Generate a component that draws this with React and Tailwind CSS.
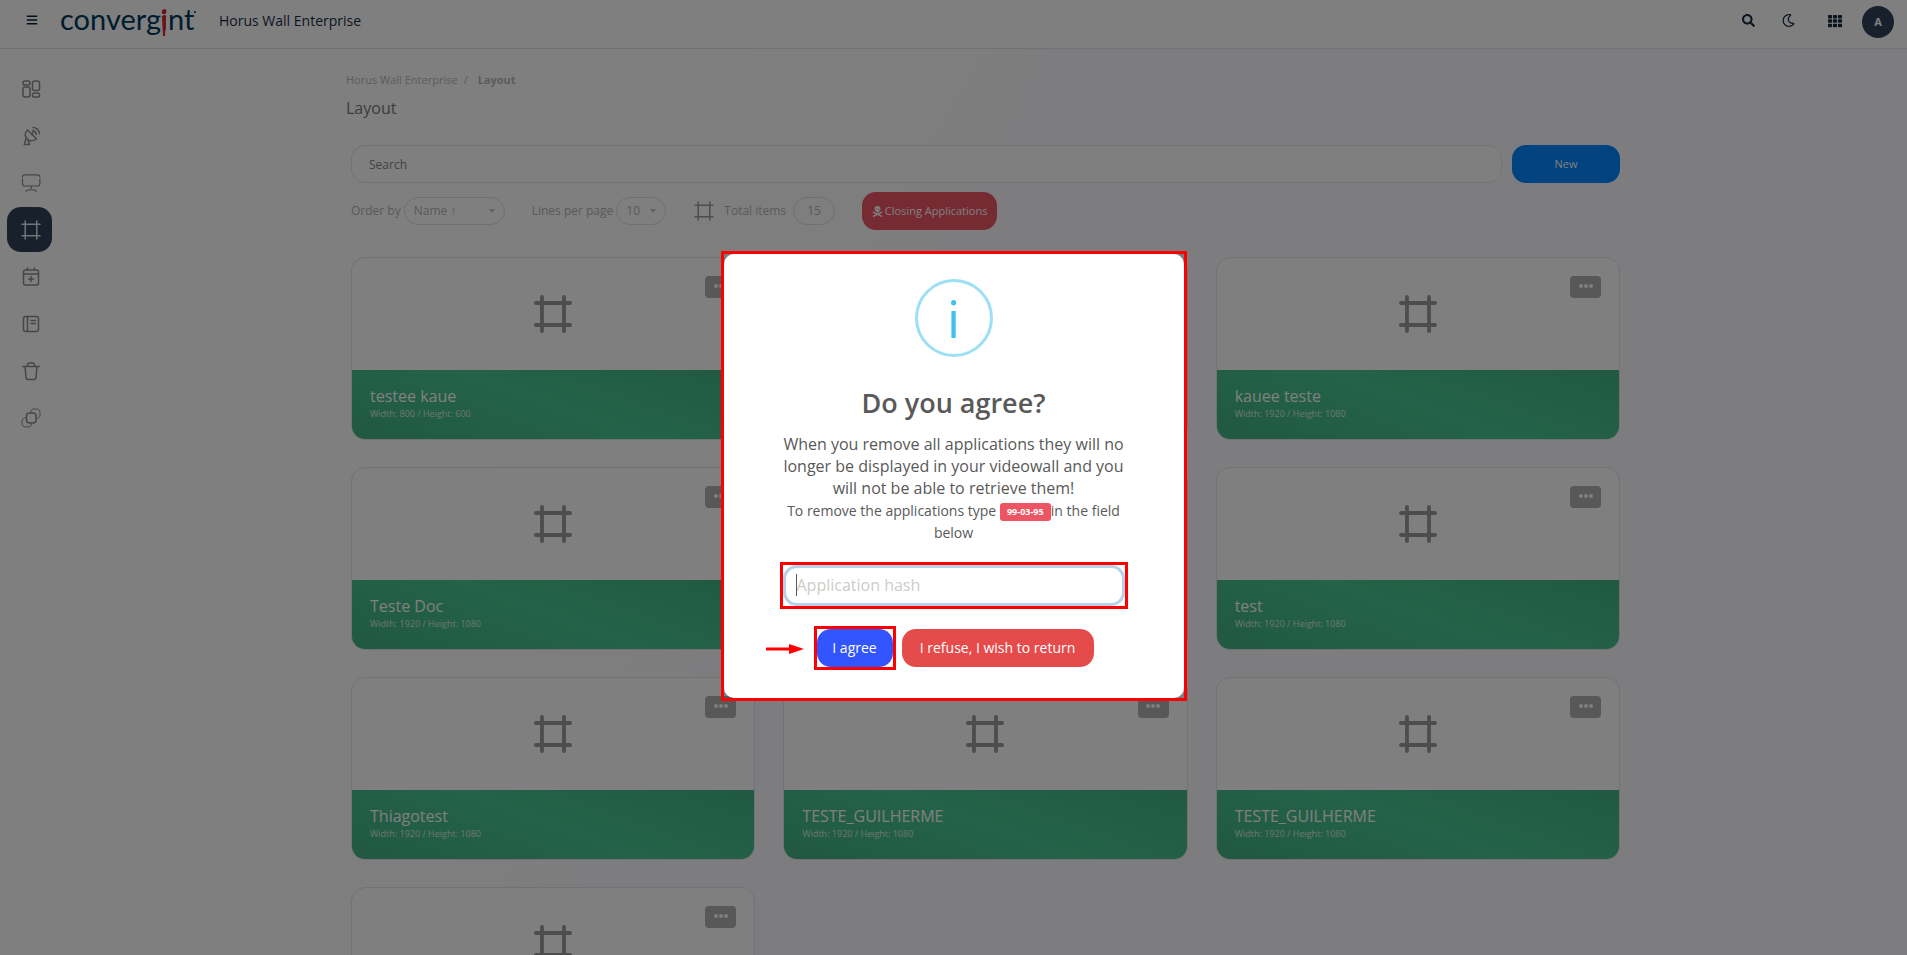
import React from 'react';
import { FaBars, FaSearch, FaRegMoon, FaTh, FaSkullCrossbones } from 'react-icons/fa';

const layouts = [
  { id: 1, name: 'testee kaue', width: 800, height: 600 },
  { id: 2, name: 'teste', width: 1920, height: 1080 },
  { id: 3, name: 'kauee teste', width: 1920, height: 1080 },
  { id: 4, name: 'Teste Doc', width: 1920, height: 1080 },
  { id: 5, name: 'teste', width: 1920, height: 1080 },
  { id: 6, name: 'test', width: 1920, height: 1080 },
  { id: 7, name: 'Thiagotest', width: 1920, height: 1080 },
  { id: 8, name: 'TESTE_GUILHERME', width: 1920, height: 1080 },
  { id: 9, name: 'TESTE_GUILHERME', width: 1920, height: 1080 },
  { id: 10, name: 'teste', width: 1920, height: 1080 },
];

const Icon = ({ className = 'size-5', strokeWidth = 1.5, children }) => (
  <svg
    viewBox="0 0 20 20"
    className={className}
    fill="none"
    stroke="currentColor"
    strokeWidth={strokeWidth}
    strokeLinecap="round"
    strokeLinejoin="round"
    aria-hidden="true"
  >
    {children}
  </svg>
);

const FrameIcon = ({ className, strokeWidth = 2 }) => (
  <Icon className={className} strokeWidth={strokeWidth}>
    <path d="M4.2 1v18M15.8 1v18M1 4.2h18M1 15.8h18" />
  </Icon>
);

const menu = [
  {
    label: 'Dashboard',
    icon: (
      <Icon>
        <rect x="2" y="2" width="7" height="4" rx="1.8" />
        <rect x="2" y="8" width="7" height="10" rx="2" />
        <rect x="11.5" y="2" width="7" height="9.5" rx="2" />
        <rect x="11.5" y="14" width="7" height="4" rx="1.8" />
      </Icon>
    ),
  },
  {
    label: 'Sources',
    icon: (
      <Icon>
        <path d="M6.500 4C3.800 7 3.800 10.500 6.300 13s6.200 2.400 9.200-.2zM5 12.500L3.200 18.500h5.300l-1.500-4M10.500 8.500l1.500-2M11.500 4.500c2.200.3 3.500 1.700 3.800 3.800M12.200 1.500c3.500.4 5.900 2.800 6.300 6.200" />
      </Icon>
    ),
  },
  {
    label: 'Displays',
    icon: (
      <Icon strokeWidth={1.2}>
        <path d="M1.500 3.800c0-1.500.8-2 2.200-2h13c1.400 0 2.200.7 2.200 2.200M18.900 6v4.500c0 1.500-.8 2.500-2.500 2.500H4c-1.700 0-2.500-1-2.500-2.500V5.800M10.200 13v2.500M5 18c2-1.700 8.500-1.700 10.500 0" />
      </Icon>
    ),
  },
  { label: 'Layout', active: true, icon: <FrameIcon className="size-5" strokeWidth={1.5} /> },
  {
    label: 'Schedule',
    icon: (
      <Icon>
        <rect x="2.500" y="3" width="15" height="15" rx="2" />
        <path d="M2.500 7h15M6.500 1v2M13.500 1v2M10 9.500v5M7.500 12h5" />
      </Icon>
    ),
  },
  {
    label: 'Log',
    icon: (
      <Icon>
        <rect x="2.500" y="2.500" width="15" height="15" rx="2" />
        <path d="M6.500 2.500v15M10 6.500h4.500M10 9.500h4.500" />
      </Icon>
    ),
  },
  {
    label: 'Trash',
    icon: (
      <Icon>
        <path d="M1.500 5.500h17M6.500 5.500V4c0-1.300.7-2 2-2h3c1.300 0 2 .7 2 2v1.500M4 5.500l1 11c.1 1.300.8 2 2 2h6c1.200 0 1.900-.7 2-2l1-11" />
      </Icon>
    ),
  },
  {
    label: 'Groups',
    icon: (
      <Icon>
        <rect x="5.500" y="5" width="9.500" height="10" rx="3" />
        <path d="M9.500 4.500c.4-2.300 1.500-3.500 3.500-3.500h2.500c2 0 3.500 1.500 3.500 3.500V7c0 2-1.500 3.500-3.500 3.500" strokeWidth="1" />
        <path d="M5 9.500C2.500 9.800 1 11 1 13v2.500C1 17.500 2.500 19 4.500 19H7c2.300 0 3.500-1.200 3.700-3.500" strokeWidth="1" />
      </Icon>
    ),
  },
];

const Logo = () => (
  <a
    href="#"
    aria-label="convergint"
    className="ml-[22px] flex w-[137px] items-start font-[Lato] text-[29px] leading-[32px] font-normal text-[#003a5d]"
  >
    <span>
      converg
      <span className="relative text-[#d8232a]">
        i
        <svg viewBox="0 0 6 28" className="absolute top-2 left-0 h-7 w-[6px]" aria-hidden="true">
          <circle cx="3" cy="3" r="2.300" fill="currentColor" />
          <path d="M1 7h4l-1 20H2z" fill="currentColor" />
        </svg>
      </span>
      nt
    </span>
    <span className="mt-2 size-[2px] rounded-full bg-[#003a5d]" />
  </a>
);

const Header = () => (
  <header className="flex h-[49px] shrink-0 items-start border-b border-[#e4e4e9] bg-white pr-[13px] pl-[26px] text-[#172c46]">
    <button type="button" aria-label="Toggle menu" className="mt-3.5 text-[#0d2233]">
      <FaBars className="size-3" />
    </button>
    <div className="mt-[3px]">
      <Logo />
    </div>
    <span className="mt-[11px] ml-[22px] text-sm leading-5 font-medium">Horus Wall Enterprise</span>
    <div className="ml-auto flex items-start">
      <button type="button" aria-label="Search" className="mt-3.5">
        <FaSearch className="size-[13px]" />
      </button>
      <button type="button" aria-label="Dark mode" className="mt-3.5 ml-[27px]">
        <FaRegMoon className="size-[13px]" />
      </button>
      <button type="button" aria-label="Applications" className="mt-3.5 ml-[33px]">
        <FaTh className="size-3.5" />
      </button>
      <button
        type="button"
        className="mt-1.5 ml-5 size-8 rounded-full bg-[#304158] text-[11px] font-bold text-white"
      >
        A
      </button>
    </div>
  </header>
);

const Sidebar = () => (
  <nav className="flex w-[65px] shrink-0 flex-col gap-0.5 pt-[17px] pl-[7px]">
    {menu.map((item) => (
      <a
        key={item.label}
        href="#"
        aria-label={item.label}
        className={
          item.active
            ? 'flex size-[45px] items-center justify-center rounded-[14px] bg-[#304158] pl-0.5 text-[#e4e6ea]'
            : 'flex size-[45px] items-center justify-center pl-0.5 text-[#8c8c8c]'
        }
      >
        {item.icon}
      </a>
    ))}
  </nav>
);

const SelectBox = ({ id, label, value, className }) => (
  <div className="flex items-center gap-[3px]">
    <label htmlFor={id}>{label}</label>
    <div className="relative">
      <select
        id={id}
        className={`h-7 appearance-none rounded-[14px] border border-[#e0e0e0] bg-transparent pl-[9px] ${className}`}
      >
        <option>{value}</option>
      </select>
      <svg viewBox="0 0 6 4" className="pointer-events-none absolute top-3 right-2.5 h-1 w-1.5" aria-hidden="true">
        <path d="M0 0h6L3 4z" fill="#c4c4c4" />
      </svg>
    </div>
  </div>
);

const Filters = () => (
  <div className="mt-[9px] flex h-[38px] items-center text-xs text-[#b4b4b4]">
    <SelectBox id="order" label="Order by" value="Name ↑" className="w-[101px]" />
    <div className="ml-[27px]">
      <SelectBox id="lines" label="Lines per page" value="10" className="w-[50px]" />
    </div>
    <FrameIcon className="ml-7 size-5 text-[#9c9c9c]" strokeWidth={1.5} />
    <span className="ml-2.5">Total items</span>
    <span className="ml-[7px] flex h-7 w-[42px] items-center justify-center rounded-[14px] border border-[#e0e0e0]">
      15
    </span>
    <button
      type="button"
      className="ml-[27px] flex h-[38px] w-[135px] items-center justify-center gap-0.5 rounded-[14px] bg-[#ed5565] text-[11px] text-white"
    >
      <FaSkullCrossbones className="size-[11px]" />
      Closing Applications
    </button>
  </div>
);

const LayoutCard = ({ layout }) => (
  <article className="relative overflow-hidden rounded-[14px] border border-[#e4e4e6] bg-white">
    <div className="flex h-28 items-center justify-center text-[#9a9a9a]">
      <FrameIcon className="size-[38px]" />
    </div>
    <button
      type="button"
      aria-label={`Options for ${layout.name}`}
      className="absolute top-[18px] right-[18px] flex h-[22px] w-[31px] justify-center gap-px rounded-[4px] bg-[#b0b0b0] pt-2"
    >
      <span className="size-1 rounded-full bg-white" />
      <span className="size-1 rounded-full bg-white" />
      <span className="size-1 rounded-full bg-white" />
    </button>
    <div className="h-[69px] bg-[linear-gradient(20deg,#42b084,#48c692_50%,#42b284)] px-[18px] pt-3.5 text-white">
      <h2 className="text-base leading-6">{layout.name}</h2>
      <p className="text-[9px] leading-3 text-[#dcebe4]">
        Width: {layout.width} / Height: {layout.height}
      </p>
    </div>
  </article>
);

const AgreeDialog = () => (
  <div className="fixed inset-0 z-10 flex items-center justify-center bg-black/50 pb-1">
    <div className="border-[3px] border-[#ff0000]">
      <div
        role="dialog"
        aria-modal="true"
        aria-labelledby="agree-title"
        className="flex w-[460px] flex-col items-center rounded-[10px] bg-white px-14 pt-[25px] pb-7 text-center text-[#595959]"
      >
        <div className="flex size-[78px] items-center justify-center rounded-full border-[3px] border-[#9de0f6] text-[52px] leading-none text-[#3fc3ee]">
          i
        </div>
        <h1 id="agree-title" className="mt-7 text-[27px] leading-9 font-semibold">
          Do you agree?
        </h1>
        <p className="mt-3 text-base leading-[22px]">
          When you remove all applications they will no longer be displayed in your videowall and you will not be able
          to retrieve them!
        </p>
        <p className="mt-px text-sm leading-[22px]">
          To remove the applications type{' '}
          <span className="inline-flex h-[18px] w-[51px] items-center justify-center rounded-[3px] bg-[#ed5565] align-middle text-[9px] leading-none font-bold text-white">
            99-03-95
          </span>
          in the field below
        </p>
        <div className="relative mt-[18px] w-full border-[3px] border-[#ff0000]">
          <input
            type="text"
            autoFocus
            aria-label="Application hash"
            placeholder="Application hash"
            className="block h-[41px] w-full rounded-[14px] border-[3px] border-[#b4d2ea] bg-white px-[11px] text-base caret-transparent outline-none placeholder:text-[#cccccc]"
          />
          <span className="pointer-events-none absolute top-[9px] left-[13px] h-[22px] w-px bg-[#595959]" />
        </div>
        <div className="relative mt-[17px] flex items-center gap-1.5">
          <svg viewBox="0 0 38 10" className="absolute top-[18px] right-full mr-2.5 h-2.5 w-[38px]" aria-hidden="true">
            <path d="M1 5h24" stroke="#ff0000" strokeWidth="3" strokeLinecap="round" />
            <path d="M23 0l15 5-15 5z" fill="#ff0000" />
          </svg>
          <div className="border-[3px] border-[#ff0000]">
            <button type="button" className="block h-[38px] w-[76px] rounded-[14px] bg-[#3355ff] text-sm text-white">
              I agree
            </button>
          </div>
          <button type="button" className="h-[38px] w-[192px] rounded-[14px] bg-[#e64b4b] text-sm text-white">
            I refuse, I wish to return
          </button>
        </div>
      </div>
    </div>
  </div>
);

const App = () => {
  return (
    <div className="flex h-screen flex-col overflow-hidden bg-[linear-gradient(120deg,#ffffff_25%,#fbfbff_45%)] font-['Open_Sans','Noto_Sans',sans-serif]">
      <Header />
      <div className="flex min-h-0 flex-1">
        <Sidebar />
        <main className="min-w-0 flex-1 overflow-hidden">
          <div className="mx-auto max-w-[1280px]">
            <nav aria-label="Breadcrumb" className="flex pt-[21px] text-[11px] leading-5 text-[#b8b8b8]">
              <a href="#">Horus Wall Enterprise</a>
              <span className="mr-2.5 ml-1.5">/</span>
              <span className="font-bold">Layout</span>
            </nav>
            <h1 className="mt-1.5 text-base leading-6 text-[#787878]">Layout</h1>
            <div className="pr-1.5 pl-[5px]">
              <form className="mt-[25px] flex gap-2.5">
                <input
                  type="search"
                  aria-label="Search"
                  placeholder="Search"
                  className="h-[38px] min-w-0 flex-1 rounded-[14px] border border-[#e4e4e4] bg-white px-[17px] text-xs placeholder:text-[#848484]"
                />
                <button type="button" className="h-[38px] w-[108px] rounded-[14px] bg-[#0086ff] text-[11px] text-white">
                  New
                </button>
              </form>
              <Filters />
              <section className="mt-[27px] grid grid-cols-3 gap-x-7 gap-y-[27px]">
                {layouts.map((layout) => (
                  <LayoutCard key={layout.id} layout={layout} />
                ))}
              </section>
            </div>
          </div>
        </main>
      </div>
      <AgreeDialog />
    </div>
  );
};

export default App;
